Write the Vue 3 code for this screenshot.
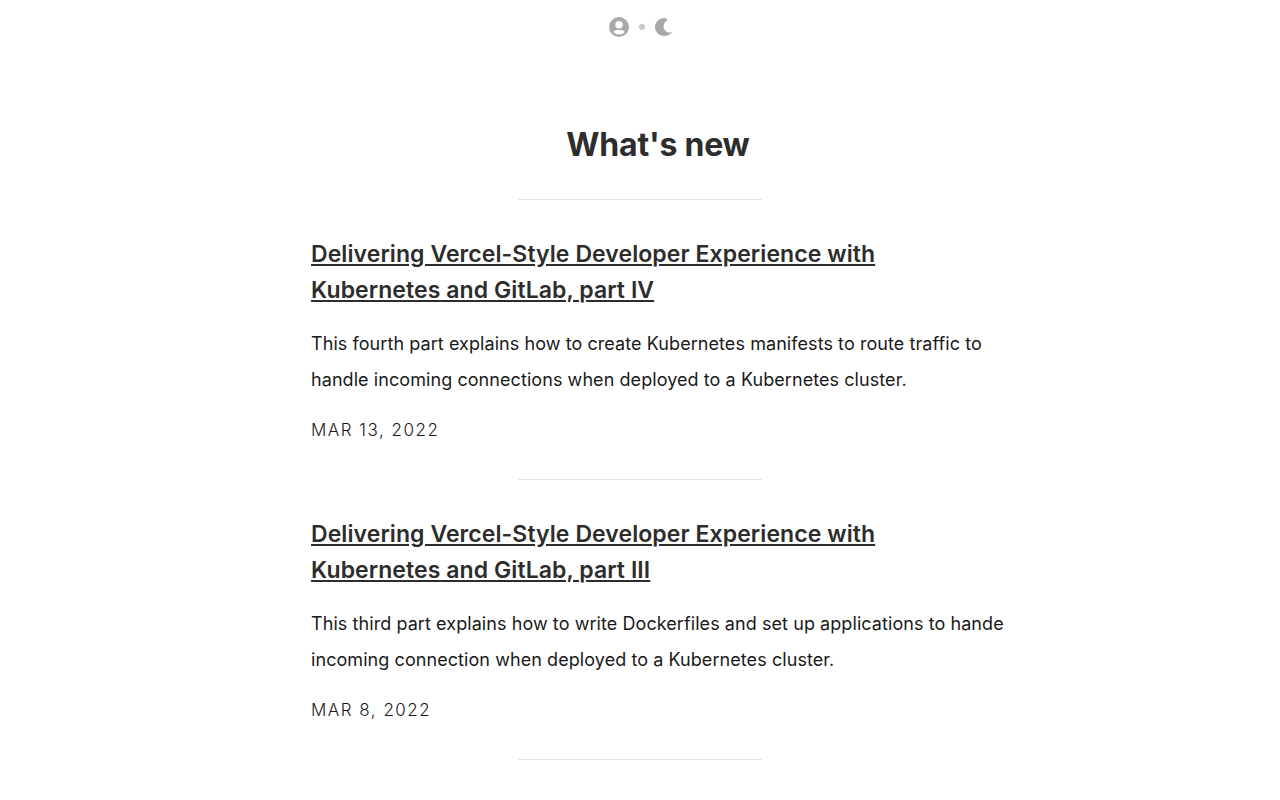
<template>
  <div class="page">
    <header class="top">
      <svg class="icon" viewBox="0 0 20 20" width="20" height="20" aria-hidden="true">
        <path fill-rule="evenodd" d="M10 0a10 10 0 1 0 0 20a10 10 0 0 0 0-20zM10 4.100a3.700 3.700 0 1 1 0 7.400a3.700 3.700 0 0 1 0-7.400zM10 17.600a7.600 7.600 0 0 1-5.700-2.600c.7-1.400 2.300-1.900 4.100-1.900h3.200c1.800 0 3.400.5 4.100 1.900a7.600 7.600 0 0 1-5.700 2.600z" />
      </svg>
      <span class="dot"></span>
      <svg class="icon" viewBox="0 0 17 18" width="17" height="18" aria-hidden="true">
        <path d="M9.500 0C4.200 0 0 4 0 9s4.200 9 9.500 9c2.900 0 5.500-1.200 7.300-3.200c.2-.3 0-.6-.3-.5c-.6.100-1 .2-1.500.2c-3.700 0-6.400-2.600-6.400-6.100c0-2.500 1.400-4.700 3.600-5.900c.3-.2.3-.7-.1-.9C11.300 .2 10.500 0 9.500 0z" />
      </svg>
    </header>

    <main class="content">
      <h1 class="heading">What's new</h1>
      <hr class="rule" />
      <template v-for="post in posts" :key="post.title">
        <article class="post">
          <h2 class="post-title"><a href="#">{{ post.title }}</a></h2>
          <p class="post-text">{{ post.text }}</p>
          <p class="post-date">{{ post.date }}</p>
        </article>
        <hr class="rule" />
      </template>
    </main>
  </div>
</template>

<script setup>
const posts = [
  {
    title: 'Delivering Vercel-Style Developer Experience with Kubernetes and GitLab, part IV',
    text: 'This fourth part explains how to create Kubernetes manifests to route traffic to handle incoming connections when deployed to a Kubernetes cluster.',
    date: 'MAR 13, 2022',
  },
  {
    title: 'Delivering Vercel-Style Developer Experience with Kubernetes and GitLab, part III',
    text: 'This third part explains how to write Dockerfiles and set up applications to hande incoming connection when deployed to a Kubernetes cluster.',
    date: 'MAR 8, 2022',
  },
]
</script>

<style>
html, body {
  margin: 0;
  background: #fff;
  overflow: hidden;
}
</style>

<style scoped>
.page {
  font-family: Inter, "Liberation Sans", sans-serif;
  color: #1a1a1a;
  height: 800px;
  overflow: hidden;
}

.top {
  height: 54px;
  display: flex;
  align-items: center;
  justify-content: center;
  gap: 10px;
}

.icon {
  fill: #a8a8a8;
}

.dot {
  width: 6px;
  height: 6px;
  border-radius: 50%;
  background: #c8c8c8;
}

.content {
  padding: 71px 0 0 311px;
  width: 694px;
}

.heading {
  margin: 0;
  font-size: 32px;
  line-height: 40px;
  font-weight: 700;
  letter-spacing: -0.2px;
  color: #2d2d2d;
  text-align: center;
}

.rule {
  width: 244px;
  height: 1px;
  border: 0;
  background: #e5e5e5;
  margin: 34px 0 0 207px;
}

.post {
  padding-top: 36px;
}

.post + .rule {
  margin-top: 31px;
}

.post-title {
  margin: 0;
  font-size: 23px;
  line-height: 36px;
  font-weight: 600;
  letter-spacing: 0.08px;
  color: #2d2d2d;
}

.post-title a {
  color: inherit;
}

.post-text {
  margin: 18px 0 0;
  font-size: 18px;
  line-height: 36px;
  letter-spacing: 0.07px;
}

.post-date {
  margin: 14px 0 0;
  font-size: 17px;
  line-height: 36px;
  letter-spacing: 1.5px;
  font-weight: 300;
}
</style>
